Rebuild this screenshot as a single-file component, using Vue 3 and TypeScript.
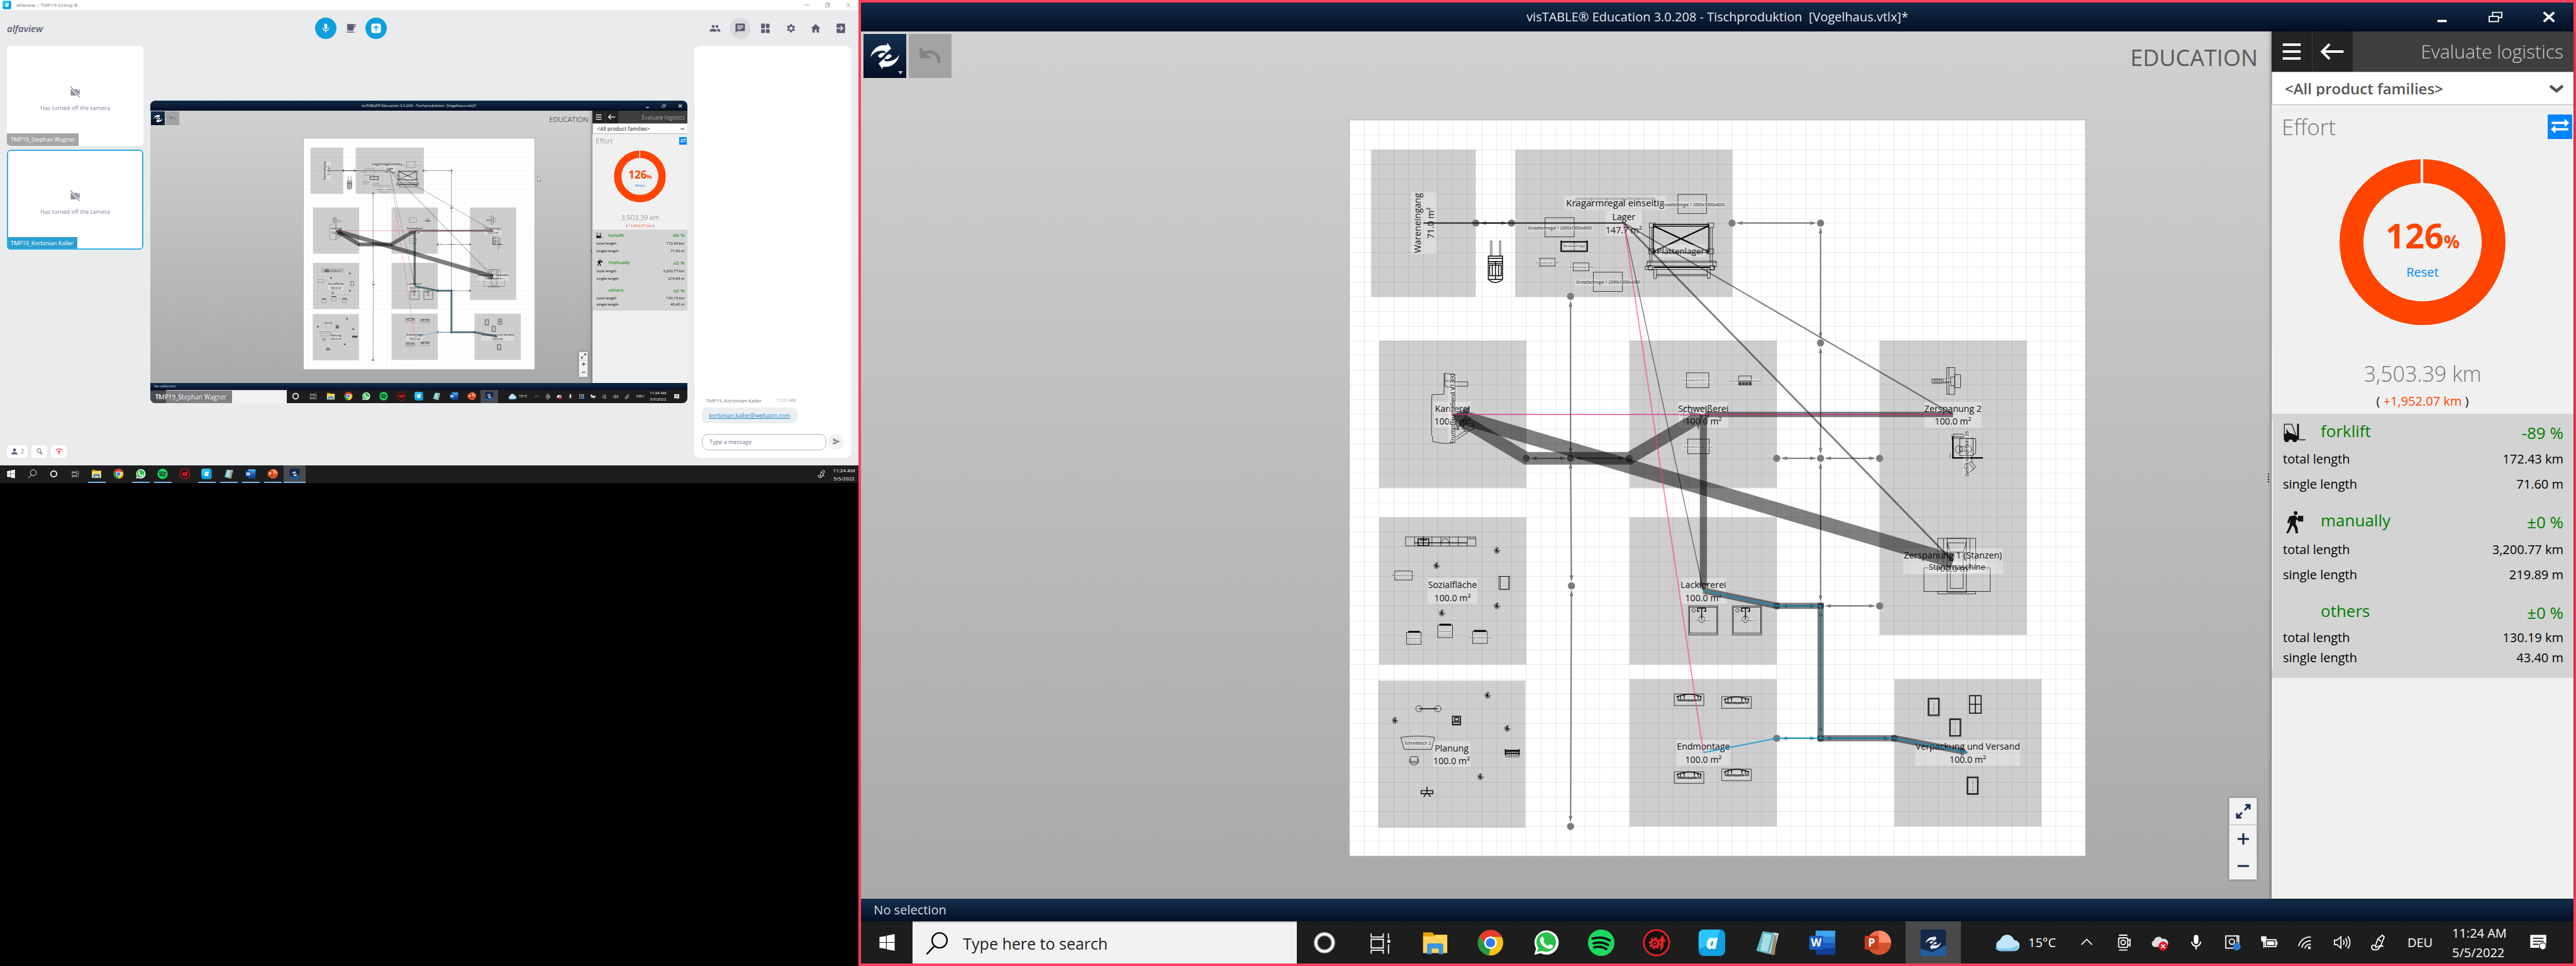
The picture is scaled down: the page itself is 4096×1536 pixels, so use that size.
<script setup lang="ts">
type Point = [number, number]

interface Label { x: number; y: number; text: string; size: number; w: number; turn?: boolean }

defineOptions({ name: 'App' })
defineProps<{ screen?: 'full' | 'mini' }>()

const participants = [
  { name: 'TMP19_Stephan Wagner', active: false },
  { name: 'TMP19_Korbinian Kaller', active: true },
]

const meetingTools = ['people', 'chat', 'layout', 'gear', 'home', 'leave']
const apps = ['cortana', 'taskview', 'explorer', 'chrome', 'whatsapp', 'spotify', 'game', 'alfa', 'notes', 'word', 'ppt', 'vistable']
const runningApps = ['explorer', 'whatsapp', 'spotify', 'alfa', 'notes', 'word', 'ppt', 'vistable']
const tray = ['up', 'camera', 'cloudx', 'mic', 'outlook', 'battery', 'wifi', 'volume', 'pen']

const groups = [
  { name: 'forklift', icon: 'forklift', change: '-89 %', total: '172.43 km', single: '71.60 m' },
  { name: 'manually', icon: 'walker', change: '±0 %', total: '3,200.77 km', single: '219.89 m' },
  { name: 'others', icon: '', change: '±0 %', total: '130.19 km', single: '43.40 m' },
]

/* floor plan: 50 x 50 cells on a 1645 unit square */
const SIZE = 1645
const grid = Array.from({ length: 51 }, (_, i) => Math.round((i * SIZE) / 50))
  .map((p) => `M${p} 0V${SIZE}M0 ${p}H${SIZE}`)
  .join('')

const rooms = [
  [48, 66, 234, 329], [370, 66, 486, 329], [66, 493, 329, 329], [626, 493, 329, 329],
  [1185, 493, 329, 658], [66, 888, 329, 329], [626, 888, 329, 329], [64, 1253, 329, 329],
  [626, 1250, 329, 329], [1218, 1250, 329, 329],
]

const stations = [
  { x: 165, y: 230, name: 'Wareneingang', area: '71.0 m²', w: 138, turn: true },
  { x: 613, y: 230, name: 'Lager', area: '147.7 m²', w: 81 },
  { x: 230, y: 658, name: 'Kanterei', area: '100.0 m²', w: 83 },
  { x: 791, y: 658, name: 'Schweißerei', area: '100.0 m²', w: 111 },
  { x: 1349, y: 658, name: 'Zerspanung 2', area: '100.0 m²', w: 130 },
  { x: 1349, y: 986, name: 'Zerspanung 1 (Stanzen)', area: '100.0 m²', w: 223 },
  { x: 230, y: 1052, name: 'Sozialfläche', area: '100.0 m²', w: 111 },
  { x: 791, y: 1052, name: 'Lackiererei', area: '100.0 m²', w: 102 },
  { x: 228, y: 1417, name: 'Planung', area: '100.0 m²', w: 83 },
  { x: 791, y: 1414, name: 'Endmontage', area: '100.0 m²', w: 120 },
  { x: 1382, y: 1414, name: 'Verpackung und Versand', area: '100.0 m²', w: 235 },
]

const labels: Label[] = [
  { x: 594, y: 185, text: 'Kragarmregal einseitig', size: 21, w: 228 },
  { x: 740, y: 292, text: 'Plattenlager', size: 19, w: 112 },
  { x: 470, y: 241, text: 'Grossfachregal 1 2000x1300x4000', size: 9, w: 148 },
  { x: 767, y: 189, text: 'Grossfachregal 1 2000x1300x4000', size: 9, w: 148 },
  { x: 578, y: 363, text: 'Grossfachregal 1 2000x1300x4000', size: 9, w: 148 },
  { x: 502, y: 282, text: 'Bereitstellregal', size: 7, w: 53 },
  { x: 442, y: 318, text: 'Fachbodenregal 1000', size: 5, w: 47 },
  { x: 518, y: 328, text: 'Fachbodenregal 1000', size: 5, w: 47 },
  { x: 230, y: 645, text: 'TrumpfTrumaBend V1300', size: 13, w: 151, turn: true },
  { x: 778, y: 582, text: 'Schweißtisch 16er 1,5x1', size: 6, w: 68 },
  { x: 772, y: 660, text: 'Schweißtisch 16er 1,5x1', size: 6, w: 68 },
  { x: 780, y: 730, text: 'Schweißtisch 16er 1,5x1', size: 6, w: 68 },
  { x: 884, y: 583, text: 'Schweißtisch Werkzeugwagen', size: 5, w: 66 },
  { x: 1334, y: 585, text: 'Säge', size: 8, w: 18 },
  { x: 1380, y: 746, text: 'Deckel-Maho DMU 35', size: 10, w: 94, turn: true },
  { x: 1358, y: 999, text: 'Stanzmaschine', size: 18, w: 128 },
  { x: 120, y: 1018, text: 'Metallschrank orange', size: 5, w: 47 },
  { x: 214, y: 1142, text: 'Eisautomat', size: 5, w: 26 },
  { x: 144, y: 1158, text: 'Snackautomat', size: 5, w: 33 },
  { x: 292, y: 1156, text: 'Kaltgetränkeautomat', size: 5, w: 47 },
  { x: 152, y: 1393, text: 'Schreibtisch 2', size: 9, w: 60 },
  { x: 790, y: 1118, text: 'Duschkabine', size: 5, w: 28 },
  { x: 889, y: 1118, text: 'Duschkabine', size: 5, w: 28 },
  { x: 759, y: 1297, text: 'Werkbank 1', size: 9, w: 52 },
  { x: 865, y: 1303, text: 'Werkbank 1', size: 9, w: 52 },
  { x: 759, y: 1471, text: 'Werkbank 1', size: 9, w: 52 },
  { x: 865, y: 1465, text: 'Werkbank 1', size: 9, w: 52 },
  { x: 1306, y: 1312, text: 'Mülltonne', size: 5, w: 22, turn: true },
  { x: 1354, y: 1358, text: 'Mülltonne', size: 5, w: 22, turn: true },
  { x: 1393, y: 1488, text: 'Mülltonne', size: 5, w: 22, turn: true },
]

const frames = [
  [437, 218, 65, 43], [734, 166, 64, 43], [545, 340, 65, 43], [425, 309, 34, 17], [500, 319, 35, 18],
  [753, 565, 50, 33], [747, 643, 50, 32], [756, 713, 48, 33], [101, 1008, 39, 20], [334, 1020, 24, 29],
  [337, 1020, 18, 29], [197, 1129, 33, 28], [127, 1145, 33, 27], [275, 1143, 33, 27],
  [758, 1086, 65, 65], [760, 1089, 61, 58], [856, 1086, 65, 65], [858, 1089, 61, 58],
  [1335, 553, 18, 60], [1353, 569, 13, 29], [1315, 935, 85, 66], [1284, 1001, 148, 53],
  [1336, 935, 43, 121], [1343, 966, 29, 81], [1315, 1054, 85, 5],
]

const plants: Point[] = [[329, 962], [194, 996], [329, 1086], [206, 1102], [308, 1286], [101, 1342], [352, 1360], [292, 1468]]
const benches: Point[] = [[726, 1283], [832, 1289], [726, 1457], [832, 1451]]
const bins: Point[] = [[1293, 1292], [1341, 1338], [1380, 1468]]

const n: Record<string, Point> = {
  a: [282, 230], b: [362, 230], c: [855, 230], d: [1053, 230], e: [494, 394], f: [395, 756],
  g: [494, 756], h: [625, 756], i: [496, 1041], j: [494, 1579], k: [1053, 498], l: [955, 756],
  m: [1053, 756], o: [1185, 756], p: [955, 1086], q: [1053, 1086], r: [1185, 1086],
  s: [955, 1382], t: [1053, 1382], u: [1218, 1382],
}

/* triangle with its tip on `tip`, opening towards `from` */
function head(tip: Point, from: Point, length: number, half: number): string {
  const dx = from[0] - tip[0]
  const dy = from[1] - tip[1]
  const d = Math.hypot(dx, dy)
  const ux = dx / d
  const uy = dy / d
  const bx = tip[0] + ux * length
  const by = tip[1] + uy * length
  const pts = [tip, [bx - uy * half, by + ux * half], [bx + uy * half, by - ux * half]]
  return pts.map((q) => q.map(Math.round).join(',')).join(' ')
}

const toward = (p: Point, q: Point, by: number): Point => {
  const d = Math.hypot(q[0] - p[0], q[1] - p[1])
  return [p[0] + ((q[0] - p[0]) / d) * by, p[1] + ((q[1] - p[1]) / d) * by]
}

const aisles = 'ab cd dk km mq qt eg gi ij fg gh lm mo pq qr st tu'.split(' ').map((pair) => {
  const p = n[pair[0]]
  const q = n[pair[1]]
  const ps = toward(p, q, 9)
  const qs = toward(q, p, 9)
  return { line: [toward(p, q, 18), toward(q, p, 18)], heads: [head(ps, q, 14, 4), head(qs, p, 14, 4)] }
})

const kanterei: Point = [230, 658]
const schweisserei: Point = [791, 658]
const lackiererei: Point = [791, 1052]
const versand: Point = [1382, 1414]

const flows = [
  { d: 'M165 230H613', w: 3, o: 0.75 },
  { d: 'M613 230L791 1052', w: 2, o: 0.5 },
  { d: 'M613 230L1349 986', w: 4, o: 0.5 },
  { d: 'M613 230L1349 658', w: 3, o: 0.5 },
  { d: 'M260 667L1349 986', w: 32, o: 0.5 },
  { d: 'M252 671L395 756H625L768 672', w: 28, o: 0.5 },
  { d: 'M800 658H1349', w: 12, o: 0.5 },
  { d: 'M791 658V1038', w: 16, o: 0.5 },
  { d: 'M791 1052L955 1086H1053V1382H1218L1370 1411', w: 14, o: 0.5 },
]
const flowHeads = [
  head(kanterei, [1349, 986], 33, 28),
  head(kanterei, n.f, 28, 26),
  head(schweisserei, n.h, 27, 24),
  head(schweisserei, [1349, 658], 12, 10),
  head(lackiererei, schweisserei, 16, 13),
  head(versand, n.u, 14, 12),
]
</script>

<template>
  <main v-if="!screen" class="desk">
    <svg class="symbols" aria-hidden="true">
      <symbol id="i-mic" viewBox="0 0 24 24"><path fill="currentColor" d="M12 14a3 3 0 0 0 3-3V5a3 3 0 0 0-6 0v6a3 3 0 0 0 3 3zm5-3a5 5 0 0 1-10 0H5.300a6.700 6.700 0 0 0 5.700 6.700V21h2v-3.300A6.700 6.700 0 0 0 18.700 11z" /></symbol>
      <symbol id="i-cup" viewBox="0 0 24 24"><path fill="currentColor" d="M20 3H4v10a4 4 0 0 0 4 4h6a4 4 0 0 0 4-4v-3h2a2 2 0 0 0 2-2V5a2 2 0 0 0-2-2zm0 5h-2V5h2zM3 19h16v2H3z" /></symbol>
      <symbol id="i-share" viewBox="0 0 24 24"><rect x="2" y="2" width="20" height="20" rx="4" fill="#fff" /><path d="M12 18V7M7 12l5-5 5 5" fill="none" stroke="#0f9fdc" stroke-width="2" /></symbol>
      <symbol id="i-people" viewBox="0 0 24 24"><path fill="currentColor" d="M8 11a3 3 0 1 0 0-6 3 3 0 0 0 0 6zm8 0a3 3 0 1 0 0-6 3 3 0 0 0 0 6zM8 13c-2.300 0-7 1.200-7 3.500V19h14v-2.500C15 14.200 10.300 13 8 13zm8 0-1 .1c1.200.8 2 2 2 3.400V19h6v-2.500c0-2.300-4.700-3.500-7-3.500z" /></symbol>
      <symbol id="i-chat" viewBox="0 0 24 24"><path fill="currentColor" d="M20 2H4a2 2 0 0 0-2 2v18l4-4h14a2 2 0 0 0 2-2V4a2 2 0 0 0-2-2zM6 6h12v2H6zm0 3h12v2H6zm0 3h8v2H6z" /></symbol>
      <symbol id="i-layout" viewBox="0 0 24 24"><path fill="currentColor" d="M3 2h8v10H3zM3 14h8v8H3zM13 14h8v8h-8z" /><rect x="13" y="2" width="8" height="10" rx="4" fill="currentColor" /></symbol>
      <symbol id="i-gear" viewBox="0 0 24 24"><path fill="currentColor" fill-rule="evenodd" d="M19.400 13a7 7 0 0 0 0-2l2.100-1.600-2-3.500-2.500 1a7 7 0 0 0-1.700-1L15 3.300h-4l-.4 2.600a7 7 0 0 0-1.700 1l-2.500-1-2 3.500L6.600 11a7 7 0 0 0 0 2l-2.200 1.600 2 3.500 2.500-1a7 7 0 0 0 1.700 1l.4 2.600h4l.4-2.600a7 7 0 0 0 1.700-1l2.500 1 2-3.500zM13 15.500a3.500 3.500 0 1 1 0-7 3.500 3.500 0 0 1 0 7z" /></symbol>
      <symbol id="i-home" viewBox="0 0 24 24"><path fill="currentColor" d="M10 21v-6h4v6h5v-9h3L12 3 2 12h3v9z" /></symbol>
      <symbol id="i-leave" viewBox="0 0 24 24"><rect x="3" y="2" width="18" height="20" rx="2" fill="currentColor" /><path d="M3 12h13M11 7l5 5-5 5" fill="none" stroke="#e9ebec" stroke-width="2" /></symbol>
      <symbol id="i-nocam" viewBox="0 0 24 24"><path fill="#8f8d9f" d="M3 6h14v4l4-4v12l-4-4v5H3z" /><path d="M3 2l18 20" stroke="#fff" stroke-width="4" /><path d="M3 1l18 21" stroke="#8f8d9f" stroke-width="2" /></symbol>
      <symbol id="i-user" viewBox="0 0 24 24"><circle cx="12" cy="7" r="5" fill="#5d5b72" /><path fill="#5d5b72" d="M2 21c0-5 4-7 10-7s10 2 10 7z" /></symbol>
      <symbol id="i-find" viewBox="0 0 24 24"><circle cx="10" cy="9" r="6" fill="none" stroke="#5d5b72" stroke-width="2" /><path d="M14 14l6 7" stroke="#5d5b72" stroke-width="3" /></symbol>
      <symbol id="i-net" viewBox="0 0 24 24"><path d="M2 8q10-8 20 0M7 13q5-4 10 0M12 12v9" fill="none" stroke="#ff3f5e" stroke-width="3" /></symbol>
      <symbol id="i-send" viewBox="0 0 24 24"><path fill="#8f8d9f" d="M3 3l19 9-19 9v-7l10-2-10-2z" /></symbol>
      <symbol id="i-win" viewBox="0 0 48 48"><path fill="#fff" d="M4 10l17-3v16H4zM23 6l21-4v21H23zM4 25h17v16L4 38zM23 25h21v21l-21-4z" /></symbol>
      <symbol id="i-lens" viewBox="0 0 48 48"><circle cx="29" cy="18" r="15" fill="none" stroke="currentColor" stroke-width="3" /><path d="M19 29L3 46" stroke="currentColor" stroke-width="3" /></symbol>
      <symbol id="i-cortana" viewBox="0 0 48 48"><circle cx="24" cy="24" r="15" fill="none" stroke="#999" stroke-width="7" /><circle cx="24" cy="24" r="15" fill="none" stroke="#fff" stroke-width="4" /></symbol>
      <symbol id="i-taskview" viewBox="0 0 48 48"><path d="M9 8v6h21V8M9 18h21v15H9zM9 43v-6h21v6M39 8v9M39 27v16" fill="none" stroke="#fff" stroke-width="2" /><rect x="37" y="19" width="5" height="5" fill="#fff" /></symbol>
      <symbol id="i-explorer" viewBox="0 0 48 48"><path fill="#e3a100" d="M3 6h16l4 5v5H3z" /><path fill="#ffd45e" d="M3 13h18l3-3h21v32H3z" /><path fill="#3a96dd" d="M10 44V29a4 4 0 0 1 4-4h20a4 4 0 0 1 4 4v15h-8V34H18v10z" /></symbol>
      <symbol id="i-chrome" viewBox="0 0 48 48"><circle cx="24" cy="24" r="22" fill="#fbc116" /><path fill="#e33b2e" d="M5 13a22 22 0 0 1 39 1H24l-9 14z" /><path fill="#269a4b" d="M5 13l10 16 9 5-3 12A22 22 0 0 1 5 13z" /><circle cx="24" cy="24" r="11" fill="#fff" /><circle cx="24" cy="24" r="8" fill="#2f7af0" /></symbol>
      <symbol id="i-whatsapp" viewBox="0 0 48 48"><path fill="#fff" d="M4 45l3-11A21 21 0 1 1 15 42z" /><path fill="#2bc04c" d="M9 40l2-7a17 17 0 1 1 6 5z" /><path fill="#fff" d="M17 14c2-1 3 0 4 4 1 1-2 3-1 4 2 4 4 6 8 7 1 1 2-3 4-2 4 1 5 2 4 4-2 5-8 4-12 2-5-3-9-7-10-12 0-3 1-6 3-7z" /></symbol>
      <symbol id="i-spotify" viewBox="0 0 48 48"><circle cx="24" cy="24" r="23" fill="#1ed760" /><path d="M9 17q16-5 30 3M11 25q14-4 25 3M12 32q12-3 21 3" fill="none" stroke="#111" stroke-width="4" stroke-linecap="round" /></symbol>
      <symbol id="i-game" viewBox="0 0 48 48"><circle cx="24" cy="24" r="22" fill="#111" stroke="#ec2128" stroke-width="3" /><circle cx="21" cy="25" r="6" fill="none" stroke="#ec2128" stroke-width="4" /><circle cx="21" cy="25" r="9" fill="none" stroke="#ec2128" stroke-width="3" stroke-dasharray="4 3" /><path fill="#ec2128" d="M34 10l6 12h-4v10l-6 6 2-16h-4z" /><circle cx="21" cy="25" r="2" fill="#ec2128" /></symbol>
      <symbol id="i-alfa" viewBox="0 0 48 48"><rect x="1" y="1" width="46" height="46" rx="9" fill="#109fe0" /><path fill="#2cc4ff" d="M1 34V10a9 9 0 0 1 9-9h28q-4 26-37 33z" /><text x="24" y="35" fill="#fff" font-family="Open Sans, sans-serif" font-size="34" font-weight="800" font-style="italic" text-anchor="middle">a</text></symbol>
      <symbol id="i-notes" viewBox="0 0 48 48"><path fill="#e8e8e0" d="M34 6l10 2-9 36-12-2z" /><path fill="#9a8a6a" d="M36 12l5-3-4 36h-8z" /><path fill="#5fb6c4" d="M16 4l21 3-10 37-22-6z" /><path fill="#a9dde4" d="M18 8l14 2-8 30-12-3z" /></symbol>
      <symbol id="i-word" viewBox="0 0 48 48"><path fill="#41a5ee" d="M12 3h34v11H12z" /><path fill="#2b7cd3" d="M12 14h34v10H12z" /><path fill="#185abd" d="M12 24h34v10H12z" /><path fill="#103f91" d="M12 34h34v11H12z" /><rect x="1" y="12" width="24" height="24" rx="2" fill="#185abd" /><text x="13" y="31" fill="#fff" font-family="Open Sans, sans-serif" font-size="19" font-weight="700" text-anchor="middle">W</text></symbol>
      <symbol id="i-ppt" viewBox="0 0 48 48"><circle cx="26" cy="24" r="21" fill="#ed6c47" /><path fill="#ff8f6b" d="M26 3a21 21 0 0 1 21 21H26z" /><path fill="#d35230" d="M5 24h42a21 21 0 0 1-42 0z" /><rect x="1" y="12" width="24" height="24" rx="2" fill="#c43e1c" /><text x="13" y="31" fill="#fff" font-family="Open Sans, sans-serif" font-size="19" font-weight="700" text-anchor="middle">P</text></symbol>
      <symbol id="i-swirl" viewBox="0 0 48 48"><path fill="currentColor" d="M1 26C4 12 15 5 27 7l1-4 6 9-9 8-1-4c-9-2-18 2-23 10zM47 22c-3 14-14 21-26 19l-1 4-6-9 9-8 1 4c9 2 18-2 23-10zM13 24c3-5 8-6 12-4-3 3-4 6-9 7zM35 24c-3 5-8 6-12 4 3-3 4-6 9-7z" /></symbol>
      <symbol id="i-vistable" viewBox="0 0 48 48"><rect x="2" y="1" width="44" height="46" rx="4" fill="#14284c" /><path fill="#1f5f9f" d="M2 34l20 6 24-12v15a4 4 0 0 1-4 4H6a4 4 0 0 1-4-4z" /><use href="#i-swirl" x="9" y="10" width="30" height="28" color="#e6ecf5" /></symbol>
      <symbol id="i-undo" viewBox="0 0 48 48"><path d="M12 20q14-6 22 2 4 5 4 13" fill="none" stroke="#7f8488" stroke-width="5" /><path fill="#7f8488" d="M7 9l1 18 18 1z" /></symbol>
      <symbol id="i-up" viewBox="0 0 48 48"><path d="M10 30l14-14 14 14" fill="none" stroke="#fff" stroke-width="3" /></symbol>
      <symbol id="i-camera" viewBox="0 0 48 48"><rect x="12" y="12" width="24" height="25" rx="4" fill="none" stroke="#fff" stroke-width="3" /><circle cx="24" cy="24" r="6" fill="none" stroke="#fff" stroke-width="3" /><path d="M36 20l6-4v17l-6-4M13 5h22M13 44h22" fill="none" stroke="#fff" stroke-width="3" /></symbol>
      <symbol id="i-cloudx" viewBox="0 0 48 48"><path fill="#ddd" d="M10 36a9 9 0 0 1-1-17 12 12 0 0 1 22-4 10 10 0 0 1 8 21z" /><circle cx="33" cy="34" r="12" fill="#e81123" /><path d="M28 29l10 10M38 29L28 39" stroke="#fff" stroke-width="3" /></symbol>
      <symbol id="i-outlook" viewBox="0 0 48 48"><rect x="6" y="7" width="34" height="32" fill="none" stroke="#fff" stroke-width="3" /><circle cx="22" cy="22" r="7" fill="none" stroke="#fff" stroke-width="3" /><path d="M36 5v18" stroke="#fff" stroke-width="3" /><circle cx="35" cy="35" r="10" fill="#2b7cd3" /></symbol>
      <symbol id="i-battery" viewBox="0 0 48 48"><rect x="14" y="17" width="28" height="18" fill="none" stroke="#fff" stroke-width="3" /><path fill="#fff" d="M18 21h20v10H18zM42 22h4v8h-4zM3 8h14v8a7 7 0 0 1-14 0z" /><path d="M10 22v16" stroke="#fff" stroke-width="3" /></symbol>
      <symbol id="i-wifi" viewBox="0 0 48 48"><path d="M6 34A30 30 0 0 1 38 10M14 38A22 22 0 0 1 38 20M22 40a14 14 0 0 1 16-11" fill="none" stroke="#fff" stroke-width="3" /><circle cx="34" cy="38" r="4" fill="#fff" /></symbol>
      <symbol id="i-volume" viewBox="0 0 48 48"><path d="M4 18h7l10-9v30l-10-9H4z" fill="none" stroke="#fff" stroke-width="3" /><path d="M27 18q5 6 0 12M33 13q8 11 0 22M39 8q12 16 0 32" fill="none" stroke="#fff" stroke-width="3" /></symbol>
      <symbol id="i-pen" viewBox="0 0 48 48"><path d="M16 33l6-18L34 5l5 5-9 22-13 5zM16 33c-9-5-12 2-9 7s15 5 18-1 7-7 12-5M22 15l9 6" fill="none" stroke="#fff" stroke-width="3" /></symbol>
      <symbol id="i-note" viewBox="0 0 48 48"><path fill="#fff" d="M3 4h42v34h-8v7l-9-7H3z" /><path d="M10 13h28M10 21h28M10 29h15" stroke="#1d1d1d" stroke-width="3" /><circle cx="36" cy="34" r="9" fill="#fff" stroke="#1d1d1d" stroke-width="2" /></symbol>
      <symbol id="i-weather" viewBox="0 0 48 48"><path fill="#bfe6fb" d="M12 40a11 11 0 0 1-1-21 14 14 0 0 1 27 0 10.500 10.500 0 0 1 0 21z" /><path fill="#7cc7ef" d="M12 40a11 11 0 0 1-10-7q22 6 44-4a10 10 0 0 1-8 11z" /></symbol>
      <symbol id="i-forklift" viewBox="0 0 48 48"><path d="M3 30V6h16l8 22" fill="none" stroke="#333" stroke-width="2" /><path d="M32 5v34" stroke="#111" stroke-width="4" /><path d="M33 39h15" stroke="#555" stroke-width="3" /><path fill="#111" d="M2 26h6l-1-11 6 9 12 4 6 3v8H2z" /><circle cx="8" cy="39" r="5" fill="#111" /><circle cx="25" cy="39" r="5" fill="#111" /></symbol>
      <symbol id="i-walker" viewBox="0 0 48 48"><circle cx="27" cy="5" r="4" fill="#111" /><path fill="#111" d="M14 12l12-2 6 6 3 2v3l-7-2-1 9 4 8 1 12h-5l-2-11-5-6-4 9-5 8h-4l7-16 2-13-3 8-4-2z" /><rect x="32" y="11" width="11" height="12" fill="#111" /></symbol>
    </svg>

    <section class="meeting">
      <header class="alfa-title">
        <svg class="alfa-icon"><use href="#i-alfa" /></svg>
        <span>alfaview – TMP19 Group B</span>
        <div class="alfa-window">
          <button type="button" aria-label="Minimize"><svg viewBox="0 0 10 10"><path d="M0 5h10" /></svg></button>
          <button type="button" aria-label="Restore"><svg viewBox="0 0 10 10"><path d="M1 3h6v6H1zM3 3V1h6v6H7" /></svg></button>
          <button type="button" aria-label="Close"><svg viewBox="0 0 10 10"><path d="M0 0l10 10M10 0L0 10" /></svg></button>
        </div>
      </header>

      <div class="alfa-bar">
        <div class="alfa-main">
          <strong class="brand">alfaview</strong>
          <nav class="talk">
            <button type="button" class="round blue" aria-label="Microphone"><svg><use href="#i-mic" /></svg></button>
            <button type="button" class="cup" aria-label="Break"><svg><use href="#i-cup" /></svg></button>
            <button type="button" class="round blue" aria-label="Share screen"><svg><use href="#i-share" /></svg></button>
          </nav>
        </div>
        <nav class="tools">
          <button v-for="t in meetingTools" :key="t" type="button" class="round" :class="{ on: t === 'chat' }" :aria-label="t">
            <svg><use :href="'#i-' + t" /></svg>
          </button>
        </nav>
      </div>

      <div class="alfa-body">
        <aside class="people">
          <article v-for="p in participants" :key="p.name" class="person" :class="{ active: p.active }">
            <svg><use href="#i-nocam" /></svg>
            <p>Has turned off the camera</p>
            <span class="nametag">{{ p.name }}</span>
          </article>
          <div class="pills">
            <button type="button" class="pill wide"><svg><use href="#i-user" /></svg>2</button>
            <button type="button" class="pill" aria-label="Search"><svg><use href="#i-find" /></svg></button>
            <button type="button" class="pill" aria-label="Connection"><svg><use href="#i-net" /></svg></button>
          </div>
        </aside>

        <div class="share">
          <App screen="mini" />
          <svg class="cursor" viewBox="0 0 12 18"><path d="M1 1v14l4-3 2 5 2-1-2-5h4z" fill="#fff" stroke="#444" /></svg>
          <span class="share-name">TMP19_Stephan Wagner</span>
        </div>

        <aside class="chat">
          <p class="meta"><b>TMP19_Korbinian Kaller</b><time>11:21 AM</time></p>
          <p class="bubble"><a href="mailto:korbinian.kaller@webasto.com">korbinian.kaller@webasto.com</a></p>
          <form class="compose" @submit.prevent>
            <input type="text" placeholder="Type a message" aria-label="Type a message" />
            <button type="submit" aria-label="Send"><svg><use href="#i-send" /></svg></button>
          </form>
        </aside>
      </div>

      <footer class="dock">
        <button type="button" class="sys" aria-label="Start"><svg><use href="#i-win" /></svg></button>
        <button type="button" class="sys" aria-label="Search"><svg color="#fff"><use href="#i-lens" /></svg></button>
        <button
          v-for="a in apps" :key="a" type="button" :aria-label="a"
          :class="{ sys: a === 'cortana' || a === 'taskview', running: runningApps.includes(a), front: a === 'vistable' }"
        ><svg><use :href="'#i-' + a" /></svg></button>
        <svg class="dock-pen"><use href="#i-pen" /></svg>
        <p class="dock-time">11:24 AM<br />5/5/2022</p>
      </footer>
    </section>

    <App screen="full" />
  </main>

  <section v-else class="screen" :class="screen">
    <header class="titlebar">
      <span></span>
      <h1>visTABLE® Education 3.0.208 - Tischproduktion&nbsp; [Vogelhaus.vtlx]*</h1>
      <div class="window-buttons">
        <button type="button" aria-label="Minimize"><svg viewBox="0 0 24 24"><path d="M4 19h16" stroke-width="4" /></svg></button>
        <button type="button" aria-label="Restore"><svg viewBox="0 0 24 24"><path d="M1 11h16v9H1zM7 10V4h16v9h-6" stroke-width="2" /></svg></button>
        <button type="button" aria-label="Close"><svg viewBox="0 0 24 24"><path d="M3 4l18 16M21 4L3 20" stroke-width="4" /></svg></button>
      </div>
    </header>

    <div class="work">
      <div class="stage">
        <svg class="plan" :viewBox="`0 0 ${SIZE} ${SIZE}`">
          <rect :width="SIZE" :height="SIZE" fill="#fff" />
          <rect v-for="(r, i) in rooms" :key="i" :x="r[0]" :y="r[1]" :width="r[2]" :height="r[3]" fill="#cecece" />
          <path :d="grid" class="grid" />

          <g class="ink">
            <rect v-for="(r, i) in frames" :key="i" :x="r[0]" :y="r[1]" :width="r[2]" :height="r[3]" />
            <!-- cantilever rack -->
            <path opacity=".7" d="M506 194V174H682V194M506 177H682M541 174V194M576 174V194M611 174V194M646 174V194" />
            <!-- staging rack -->
            <path stroke-width="3" d="M473 269V293H531V269M473 272H531" />
            <path d="M502 270V293" />
            <!-- fork truck -->
            <path d="M315 270V304H318V270ZM335 270V304H338V270Z" />
            <path d="M310 304H342V356Q326 370 310 356Z" stroke-width="2" />
            <path d="M310 309H342M310 316H342M310 320H342M313 324H339V348H313ZM319 324V348M326 316V356M333 324V348M312 356H340" stroke-width="2" />
            <!-- sheet storage -->
            <path d="M679 236L803 294M803 236L679 294" stroke-width="3" />
            <path d="M679 233H803V296H679ZM679 237H803" stroke-width="2" />
            <path d="M670 230H684V240H670ZM800 230H814V240H800ZM671 240V318M676 240V318M811 240V318M806 240V318M669 288H682V299H669ZM800 288H814V299H800ZM665 315H820V318H665ZM665 318V328H672V318M812 318V328H820V318M661 326H816V334H661ZM668 325V335H677V325ZM806 325V335H815V325ZM680 332V354H686V332M800 332V354H806V332M686 345H800M686 348H800" />
            <path d="M680 329H806" stroke-width="3" />
            <!-- press brake -->
            <path d="M211 566L236 569V721L212 723L186 719L185 706L183 704V639L184 614L211 613ZM213 568V595L236 599M213 583H236M236 585H264V595H236M236 710L264 690L267 696L236 716M254 680L275 677L279 690L258 697ZM255 690L278 683M236 662H246M236 691H246" />
            <!-- kitchen -->
            <path d="M125 932H282V952H125ZM145 932V952M184 932V952M204 932V952M223 932V952M243 932V952M263 932V952M204 945L210 936H217L223 945M264 936H282" />
            <path d="M145 945H263M153 936H177V951H153ZM165 931V951M157 939H173" stroke-width="2" />
            <!-- vending machines -->
            <path d="M201 1128H227M131 1144H157M278 1142H305" stroke-width="4" />
            <!-- paint booths -->
            <g v-for="x in [0, 98]" :key="x" :transform="`translate(${x} 0)`">
              <circle cx="769" cy="1096" r="4" /><circle cx="787" cy="1116" r="7" />
              <path d="M778 1091H796M778 1091V1098H782M796 1091V1098H792M787 1091V1117" stroke-width="2" />
            </g>
            <!-- welding trolley -->
            <path d="M870 593V572H898V593M870 583H898" />
            <path d="M872 584V593M875 584V593M879 584V593M882 584V593M886 584V593M889 584V593M893 584V593M896 584V593" stroke-width="2" />
            <!-- saw -->
            <path d="M1302 579H1335V588H1302ZM1307 579V588M1311 579V588M1315 579V588M1319 579V588M1323 579V588M1327 579V588M1340 553V613M1344 574H1353M1344 594H1353M1344 574V594" />
            <!-- milling centre -->
            <path d="M1348 706V756H1416M1351 711H1390L1400 712V745L1394 748M1364 712H1394V750H1364ZM1350 702H1374V708H1350ZM1347 704V714M1343 746V754M1364 730H1380V740H1364ZM1391 750V764L1400 776L1384 789M1391 764L1376 770L1374 776L1384 789M1386 768L1396 781" />
            <circle cx="1362" cy="736" r="8" /><circle cx="1383" cy="735" r="8" /><path d="M1349 708V755H1416" stroke-width="3" />
            <!-- punching machine -->
            <path d="M1337 945H1379L1372 966H1343ZM1328 935V1001M1387 935V1001M1337 945V988L1330 1001" />
            <!-- barbell, copier, desk, chair, shelf, easel -->
            <circle cx="155" cy="1316" r="7" /><circle cx="197" cy="1316" r="7" /><path d="M155 1316H197" stroke-width="2" />
            <path d="M230 1333H248V1352H230ZM235 1336H244V1343H235ZM230 1346H248M230 1351H248" stroke-width="2" />
            <path d="M114 1380Q152 1374 190 1380L183 1407H122Z" />
            <path d="M136 1423H152V1434H136ZM134 1428V1435Q144 1450 154 1435V1428M134 1437H154" />
            <path d="M348 1406V1420M379 1406V1420M347 1416H380" stroke-width="2" />
            <path d="M347 1410H380" stroke-width="4" />
            <path d="M350 1411V1425M354 1411V1425M358 1411V1425M362 1411V1425M366 1411V1425M370 1411V1425M374 1411V1425M378 1411V1425" />
            <path d="M173 1490V1506M160 1499H186V1506H160ZM171 1506L166 1513M176 1506L181 1513" stroke-width="2" />
            <!-- workbenches -->
            <g v-for="(b, i) in benches" :key="'b' + i" :transform="`translate(${b[0]} ${b[1]})`">
              <path d="M0 0H66V26H0Z" />
              <path d="M5 7Q33 -6 61 7M8 4V14H59V4M14 2V12M22 1V12M45 1V12M53 2V12" stroke-width="2" />
            </g>
            <!-- packing boxes -->
            <g v-for="(b, i) in bins" :key="'c' + i" :transform="`translate(${b[0]} ${b[1]})`">
              <path d="M0 0H26V40H0Z" /><path d="M2 2H24V38H2Z" stroke-width="2" />
            </g>
            <path d="M1386 1287H1412V1326H1386ZM1399 1287V1326M1386 1306H1412" stroke-width="2" />
            <path
              v-for="(p, i) in plants" :key="'p' + i" :transform="`translate(${p[0]} ${p[1]})`"
              d="M-7 -3L7 4M-5 5L4 -6M0 -8L1 8M-3 -6L3 6M-7 1L8 0M3 -7L-3 7M-2 -4L2 5"
            />
          </g>

          <g class="labels">
            <g v-for="s in stations" :key="s.name" :transform="`translate(${s.x} ${s.y})${s.turn ? ' rotate(-90)' : ''}`">
              <rect :x="-s.w / 2" y="-28" :width="s.w" height="57" />
              <text font-size="20" y="-6">{{ s.name }}</text>
              <text font-size="20" y="23">{{ s.area }}</text>
            </g>
            <g v-for="l in labels" :key="l.text + l.x + l.y" :transform="`translate(${l.x} ${l.y})${l.turn ? ' rotate(-90)' : ''}`">
              <rect :x="-l.w / 2" :y="-l.size * 0.75" :width="l.w" :height="l.size * 1.5" />
              <text :font-size="l.size" :y="Math.round(l.size * 0.35)" :opacity="l.size < 8 ? 0.75 : 1">{{ l.text }}</text>
            </g>
          </g>

          <g fill="#7a7a80" stroke="#7a7a80">
            <template v-for="(a, i) in aisles" :key="i">
              <line :x1="a.line[0][0]" :y1="a.line[0][1]" :x2="a.line[1][0]" :y2="a.line[1][1]" stroke-width="3" />
              <polygon v-for="h in a.heads" :key="h" :points="h" stroke="none" />
            </template>
            <circle v-for="(p, k) in n" :key="k" :cx="p[0]" :cy="p[1]" r="8" stroke="none" />
          </g>

          <path v-for="f in flows" :key="f.d" :d="f.d" fill="none" stroke="#000" :stroke-width="f.w" :stroke-opacity="f.o" />
          <polygon v-for="h in flowHeads" :key="h" :points="h" fill-opacity=".45" />
          <path d="M230 658H1349" stroke="#e0267f" stroke-width="3" stroke-opacity=".6" />
          <path d="M613 230L791 1414" stroke="#f23d9a" stroke-width="3" stroke-opacity=".7" stroke-dasharray="4 1" />
          <path d="M791 1052L955 1086H1053V1382" class="teal" />
          <path d="M791 1414L955 1382H1218L1382 1414" class="teal" />
        </svg>
      </div>

      <div class="toolbox">
        <button type="button" class="menu" aria-label="Menu"><svg><use href="#i-swirl" /></svg><i></i></button>
        <button type="button" class="undo" aria-label="Undo"><svg><use href="#i-undo" /></svg></button>
      </div>
      <strong class="edition">EDUCATION</strong>
      <div class="zoom">
        <button type="button" aria-label="Fit"><svg viewBox="0 0 24 24"><path d="M14 10l8-8M15 2h7v7M10 14l-8 8M2 15v7h7" /></svg></button>
        <button type="button" aria-label="Zoom in"><svg viewBox="0 0 24 24"><path d="M3 12h18M12 3v18" /></svg></button>
        <button type="button" aria-label="Zoom out"><svg viewBox="0 0 24 24"><path d="M3 12h18" /></svg></button>
      </div>
      <i class="splitter"></i>

      <aside class="panel">
        <header class="panel-head">
          <button type="button" aria-label="Menu"><svg viewBox="0 0 48 48"><path d="M6 10h36M6 24h36M6 38h36" stroke-width="5" /></svg></button>
          <button type="button" aria-label="Back"><svg viewBox="0 0 48 48"><path d="M2 24h44M18 9L3 24l15 15" stroke-width="5" /></svg></button>
          <h2>Evaluate logistics</h2>
        </header>
        <label class="family">
          <select aria-label="Product family"><option>&lt;All product families&gt;</option></select>
          <svg viewBox="0 0 24 16"><path d="M1 3l11 9 11-9" /></svg>
        </label>
        <div class="effort">
          <h3>Effort</h3>
          <button type="button" aria-label="Swap"><svg viewBox="0 0 48 48"><path d="M6 17h30M12 31h30" stroke="#fff" stroke-width="5" /><path fill="#fff" d="M34 8l10 9-10 9zM14 22L4 31l10 9z" /></svg></button>
        </div>
        <div class="gauge">
          <svg viewBox="0 0 266 266">
            <circle cx="133" cy="133" r="113" fill="none" stroke="#fff" stroke-width="41" />
            <circle cx="133" cy="133" r="113" fill="none" stroke="#ff4500" stroke-width="38" />
            <path d="M132 0V40" stroke="#fff" stroke-width="4" />
            <path d="M132 0V40" stroke="#ddd" stroke-width="1" />
          </svg>
          <div class="gauge-text">
            <p>126<small>%</small></p>
            <a href="#reset">Reset</a>
          </div>
        </div>
        <p class="distance">3,503.39 km</p>
        <p class="delta">( <em>+1,952.07 km</em> )</p>
        <table>
          <tbody v-for="g in groups" :key="g.name" :class="{ compact: !g.icon }">
            <tr class="group">
              <th scope="rowgroup"><svg><use v-if="g.icon" :href="'#i-' + g.icon" /></svg>{{ g.name }}</th>
              <td>{{ g.change }}</td>
            </tr>
            <tr><th scope="row">total length</th><td>{{ g.total }}</td></tr>
            <tr><th scope="row">single length</th><td>{{ g.single }}</td></tr>
          </tbody>
        </table>
      </aside>
    </div>

    <div class="status">No selection</div>

    <footer class="taskbar">
      <button type="button" class="start" aria-label="Start"><svg><use href="#i-win" /></svg></button>
      <label class="search"><svg><use href="#i-lens" /></svg><input type="text" placeholder="Type here to search" aria-label="Type here to search" /></label>
      <button v-for="a in apps" :key="a" type="button" class="app" :class="{ front: a === 'vistable' }" :aria-label="a"><svg><use :href="'#i-' + a" /></svg></button>
      <div class="tray">
        <span class="weather"><svg><use href="#i-weather" /></svg>15°C</span>
        <svg v-for="t in tray" :key="t" class="tray-icon"><use :href="'#i-' + t" color="#fff" /></svg>
        <span class="lang">DEU</span>
        <p class="clock">11:24 AM<br />5/5/2022</p>
        <svg class="note"><use href="#i-note" /></svg>
      </div>
    </footer>
  </section>
</template>

<style>
body { margin: 0; background: #000; }
</style>

<style scoped>
* { box-sizing: border-box; margin: 0; }
button { border: 0; padding: 0; background: none; font: inherit; color: inherit; display: grid; place-items: center; cursor: pointer; }
h1, h2, h3 { font-weight: 400; }
input { font: inherit; border: 0; outline: 0; min-width: 0; }

.desk {
  display: grid;
  grid-template-columns: 1fr 2fr;
  align-items: start;
  min-height: 100vh;
  background: #000;
  font-family: "Open Sans", "Noto Sans", sans-serif;
  line-height: 1;
}
.symbols { position: absolute; width: 0; height: 0; }

/* meeting window */
.meeting { display: flex; flex-direction: column; aspect-ratio: 16 / 9; background: #e9ebec; font-size: 9px; color: #85839a; min-width: 0; }
.alfa-title { display: flex; align-items: center; gap: 6px; height: 16px; padding-left: 2px; background: #fff; font-size: 8px; line-height: 12px; color: #777; }
.alfa-icon { width: 18px; height: 14px; }
.alfa-window { display: flex; margin-left: auto; }
.alfa-window button { width: 33px; height: 14px; }
.alfa-window svg { width: 8px; height: 8px; fill: none; stroke: #888; }

.alfa-bar { display: flex; align-items: center; height: 57px; padding: 0 11px; color: #5d5b72; }
.alfa-main { flex: 1; display: grid; grid-template-columns: 1fr auto 1fr; align-items: center; }
.brand { font-size: 15px; line-height: 20px; font-style: italic; font-weight: 600; }
.talk, .tools { display: flex; gap: 6px; align-items: center; }
.tools { width: 250px; justify-content: flex-end; }
.round { width: 34px; height: 34px; border-radius: 50%; }
.round svg, .cup svg { width: 18px; height: 18px; }
.cup { width: 34px; height: 34px; }
.blue { background: #0f9fdc; color: #fff; }
.on { background: #d9dbdd; }

.alfa-body { flex: 1; display: grid; grid-template-columns: 217px 1fr 250px; gap: 11px; padding: 0 11px 12px; min-height: 0; }
.people { display: flex; flex-direction: column; gap: 6px; }
.person { position: relative; height: 159px; border-radius: 6px; background: #fff; overflow: hidden; display: flex; flex-direction: column; align-items: center; justify-content: center; gap: 11px; padding-top: 8px; }
.person svg { width: 19px; height: 19px; }
.person.active::after { content: ""; position: absolute; inset: 0; border: 2px solid #34aee2; border-radius: 6px; }
.nametag { position: absolute; left: 0; bottom: 0; height: 20px; line-height: 20px; padding: 0 6px; background: #a4a5a6; color: #fff; }
.active .nametag { background: #2a9fd2; }
.pills { display: flex; gap: 6px; margin-top: auto; }
.pill { width: 25px; height: 20px; border-radius: 5px; background: #fff; color: #777; }
.pill.wide { display: flex; align-items: center; justify-content: center; gap: 4px; width: 33px; }
.pill svg { width: 12px; height: 12px; }

.share { position: relative; align-self: center; border-radius: 8px; overflow: hidden; }
.share-name { position: absolute; left: 0; bottom: 0; height: 20px; line-height: 20px; padding: 0 8px; background: rgb(90 91 94 / 75%); color: #fff; font-size: 10px; }
.cursor { position: absolute; left: 72%; top: 25%; width: 7px; height: 10px; }

.chat { display: flex; flex-direction: column; justify-content: flex-end; background: #fff; border-radius: 9px; padding: 12px; }
.meta { display: flex; gap: 24px; padding: 0 6px 6px; font-size: 8px; line-height: 10px; color: #77758c; }
.meta b { font-weight: 400; }
.meta time { font-size: 7px; color: #999; }
.bubble { align-self: flex-start; height: 25px; line-height: 25px; padding: 0 11px; border-radius: 7px; background: #eceef0; margin-bottom: 17px; }
.bubble a { color: #1a87c4; }
.compose { display: flex; gap: 3px; }
.compose input { flex: 1; height: 26px; padding: 0 11px; border: 1px solid #b4b4b8; border-radius: 10px; color: #77758c; }
.compose input::placeholder { color: #77758c; opacity: 1; }
.compose button { width: 25px; height: 25px; border-radius: 50%; background: #f2f2f3; }
.compose svg { width: 14px; height: 14px; }

.dock { display: flex; align-items: center; height: 28px; background: #1d1d1d; color: #fff; font-size: 8px; }
.dock button { width: 35px; height: 28px; }
.dock .sys { width: 34px; }
.dock button svg { width: 17px; height: 17px; }
.dock .sys svg { width: 15px; height: 15px; }
.dock .running { background: linear-gradient(#76b9ed, #76b9ed) center bottom / 28px 2px no-repeat; }
.dock .front { background: linear-gradient(#76b9ed, #76b9ed) center bottom / 100% 2px no-repeat #4a4a4a; }
.dock-pen { width: 15px; height: 15px; margin-left: auto; margin-right: 11px; }
.dock-time { margin-right: 6px; line-height: 13px; text-align: center; }

/* planning application */
.screen {
  display: grid;
  grid-template-rows: var(--title-h) 1fr var(--status-h) var(--task-h);
  aspect-ratio: 16 / 9;
  min-width: 0;
  font-size: var(--fs);
}
.full {
  --title-h: 46px; --status-h: 36px; --task-h: 67px; --fs: 20px;
  --win: 78px; --win-gap: 7px; --win-icon: 22px;
  --btn-w: 68px; --btn-h: 70px; --btn-gap: 4px; --btn-icon: 48px;
  --edu: 36px; --edu-top: 24px; --edu-right: 22px;
  --zoom: 43px; --zoom-icon: 24px; --zoom-right: 23px; --zoom-bottom: 30px;
  --panel: 480px; --head-h: 64px; --head-fs: 30px; --head-icon: 38px; --pad: 16px;
  --sel-h: 53px; --sel-fs: 24px; --sel-pad: 20px; --chev: 22px;
  --eff-h: 68px; --eff-fs: 35px; --swap: 39px;
  --ring: 266px; --ring-top: 17px; --ring-bottom: 52px; --num: 54px; --pct: 28px; --num-lh: 62px;
  --km-fs: 34px; --km-h: 48px; --delta-h: 40px;
  --g-fs: 26px; --g-h: 48px; --row-h: 40px; --row-tight: 32px; --g-gap: 16px; --g-icon: 36px; --g-icon-gap: 24px; --tab-pad: 8px; --tab-end: 16px;
  --start: 82px; --search: 611px; --search-fs: 25px; --search-gap: 20px; --lens: 38px; --app: 88px; --app-icon: 44px;
  --tray: 58px; --tray-icon: 29px; --deu: 74px; --deu-gap: 14px; --clock: 81px; --clock-lh: 31px; --note: 112px; --wx: 40px; --wx-gap: 14px; --line: 2px;
  border: 4px solid #ff3f5b;
}
.mini {
  --title-h: 16px; --status-h: 11px; --task-h: 21px; --fs: 6px;
  --win: 24px; --win-gap: 2px; --win-icon: 7px;
  --btn-w: 22px; --btn-h: 22px; --btn-gap: 1px; --btn-icon: 15px;
  --edu: 11px; --edu-top: 8px; --edu-right: 7px;
  --zoom: 13px; --zoom-icon: 8px; --zoom-right: 7px; --zoom-bottom: 9px;
  --panel: 151px; --head-h: 20px; --head-fs: 9px; --head-icon: 12px; --pad: 5px;
  --sel-h: 17px; --sel-fs: 8px; --sel-pad: 6px; --chev: 6px;
  --eff-h: 21px; --eff-fs: 11px; --swap: 12px;
  --ring: 83px; --ring-top: 5px; --ring-bottom: 16px; --num: 17px; --pct: 9px; --num-lh: 19px;
  --km-fs: 11px; --km-h: 15px; --delta-h: 12px;
  --g-fs: 8px; --g-h: 15px; --row-h: 12px; --row-tight: 10px; --g-gap: 5px; --g-icon: 11px; --g-icon-gap: 8px; --tab-pad: 2px; --tab-end: 5px;
  --start: 25px; --search: 192px; --search-fs: 8px; --search-gap: 6px; --lens: 12px; --app: 28px; --app-icon: 14px;
  --tray: 18px; --tray-icon: 9px; --deu: 23px; --deu-gap: 4px; --clock: 26px; --clock-lh: 10px; --note: 34px; --wx: 13px; --wx-gap: 4px; --line: 1px;
}

.titlebar { display: grid; grid-template-columns: 1fr auto 1fr; align-items: center; background: linear-gradient(#122b47, #040f26); color: #e2e6ec; }
.titlebar h1 { font-size: var(--fs); white-space: nowrap; }
.window-buttons { display: flex; justify-content: flex-end; gap: var(--win-gap); }
.window-buttons button { width: var(--win); height: 100%; }
.window-buttons svg { width: var(--win-icon); height: var(--win-icon); fill: none; stroke: #fff; }

.work { position: relative; display: grid; grid-template-columns: 1fr var(--panel); min-height: 0; }
.stage { display: grid; grid-template: 141fr 1170fr 68fr / 777fr 1170fr 296fr; min-height: 0; min-width: 0; background: linear-gradient(#d1d1d1, #a9a9a9); }
.plan { grid-area: 2 / 2; width: 100%; height: 100%; outline: 1px solid #b5b5b5; min-height: 0; }
.grid { fill: none; stroke: #000; stroke-opacity: .13; stroke-width: 1; }
.ink { fill: none; stroke: #000; stroke-width: 1; }
.labels { font-family: "Open Sans", "Noto Sans", sans-serif; text-anchor: middle; }
.labels rect { fill: #fff; fill-opacity: .3; }
.labels text { fill: #111; }
.teal { fill: none; stroke: #0b9bd0; stroke-width: 3; stroke-opacity: .75; }

.toolbox { position: absolute; left: var(--btn-gap); top: var(--btn-gap); display: flex; gap: var(--btn-gap); }
.toolbox button { position: relative; width: var(--btn-w); height: var(--btn-h); color: #fff; }
.toolbox svg { width: var(--btn-icon); height: var(--btn-icon); }
.menu { background: linear-gradient(#14304f, #040f26); }
.menu i { position: absolute; right: 8%; bottom: 8%; width: 12%; height: 8%; background: #b6c0cc; clip-path: polygon(0 0, 100% 0, 50% 100%); }
.undo { background: #a3a3a3; }
.edition { position: absolute; right: calc(var(--panel) + var(--edu-right)); top: var(--edu-top); font-size: var(--edu); font-weight: 400; color: #585b5e; }
.zoom { position: absolute; right: calc(var(--panel) + var(--zoom-right)); bottom: var(--zoom-bottom); background: #f2f2f2; border: 1px solid #bbb; box-shadow: 0 0 3px rgb(0 0 0 / 40%); }
.zoom button { width: var(--zoom); height: var(--zoom); }
.zoom button:first-child { border-bottom: 1px solid #bbb; }
.zoom svg { width: var(--zoom-icon); height: var(--zoom-icon); fill: none; stroke: #14284c; stroke-width: 3; }
.splitter { position: absolute; right: calc(var(--panel) + var(--btn-gap)); top: 51%; width: var(--line); height: var(--pad); background: repeating-linear-gradient(#222 0 2px, transparent 2px 4px); }

.panel { background: #f0f0f0; box-shadow: 0 0 6px rgb(0 0 0 / 60%); min-width: 0; position: relative; }
.panel-head { display: flex; align-items: stretch; gap: 1px; height: var(--head-h); background: #3e3e3e; color: #ccc; }
.panel-head button { width: var(--head-h); background: #242424; }
.panel-head svg { width: var(--head-icon); height: var(--head-icon); fill: none; stroke: #fff; }
.panel-head h2 { flex: 1; align-self: center; text-align: right; padding-right: var(--pad); font-size: var(--head-fs); font-weight: 300; }
.family { position: relative; display: flex; align-items: center; height: var(--sel-h); border: 1px solid #b5b5b5; border-right: 0; background: #fff; }
.family select { flex: 1; height: 100%; appearance: none; border: 0; background: none; padding: 0 0 0 var(--sel-pad); font: inherit; font-size: var(--sel-fs); font-weight: 600; color: #555; }
.family svg { position: absolute; right: var(--pad); width: var(--chev); height: var(--chev); fill: none; stroke: #555; stroke-width: 5; }
.effort { display: flex; align-items: center; justify-content: space-between; height: var(--eff-h); padding: 0 var(--line) 0 var(--pad); }
.effort h3 { font-size: var(--eff-fs); font-weight: 300; color: #777; }
.effort button { width: var(--swap); height: var(--swap); background: #0085ff; }
.effort svg { width: 90%; height: 90%; }
.gauge { display: grid; place-items: center; margin: var(--ring-top) 0 var(--ring-bottom); }
.gauge > * { grid-area: 1 / 1; }
.gauge > svg { width: var(--ring); height: var(--ring); }
.gauge-text { text-align: center; padding-top: var(--pad); }
.gauge-text p { font-size: var(--num); line-height: var(--num-lh); font-weight: 700; color: #ff4500; }
.gauge-text small { font-size: var(--pct); }
.gauge-text a { display: inline-block; padding-top: var(--tab-pad); color: #0085ff; text-decoration: none; }
.distance { height: var(--km-h); line-height: var(--km-h); text-align: center; font-size: var(--km-fs); font-weight: 300; color: #777; }
.delta { height: var(--delta-h); line-height: var(--delta-h); text-align: center; color: #111; }
.delta em { font-style: normal; color: #ff4500; }
table { width: 100%; border-collapse: collapse; background: #d3d3d3; border-left: var(--line) solid #f0f0f0; border-top: var(--tab-pad) solid #d3d3d3; border-bottom: var(--tab-end) solid #d3d3d3; }
tr { height: var(--row-h); }
th, td { padding: 0 var(--pad); font-weight: 400; text-align: left; vertical-align: middle; color: #000; white-space: nowrap; }
td { text-align: right; }
.group { height: var(--g-h); }
.group th, .group td { font-size: var(--g-fs); color: #008000; }
.group svg { width: var(--g-icon); height: var(--g-icon); margin-right: var(--g-icon-gap); vertical-align: middle; }
.compact tr:nth-child(2) { height: var(--row-tight); }
tbody:not(.compact)::after { content: ""; display: table-row; height: var(--g-gap); }

.status { display: flex; align-items: center; padding-left: var(--sel-pad); background: linear-gradient(#14304d, #040f26); color: #d4d9e0; }

.taskbar { display: flex; align-items: stretch; background: #1d1d1d; color: #fff; min-width: 0; }
.start { width: var(--start); }
.start svg { width: var(--tray-icon); height: var(--tray-icon); }
.search { display: flex; align-items: center; gap: var(--search-gap); width: var(--search); padding: 0 var(--sel-pad); background: #f2f2f2; border-top: var(--line) solid #c2c2c2; color: #000; font-size: var(--search-fs); }
.search svg { width: var(--lens); height: var(--lens); }
.search input { flex: 1; background: none; }
.search input::placeholder { color: #222; opacity: 1; }
.app { width: var(--app); }
.app svg { width: var(--app-icon); height: var(--app-icon); }
.app.front { background: #4a4a4a; }
.tray { display: flex; align-items: center; margin-left: auto; }
.weather { display: flex; align-items: center; gap: var(--wx-gap); padding-right: var(--sel-pad); }
.weather svg { width: var(--wx); height: var(--wx); }
.tray-icon { width: var(--tray); height: var(--tray-icon); }
.lang { width: var(--deu); margin-right: var(--deu-gap); text-align: center; }
.clock { width: var(--clock); line-height: var(--clock-lh); text-align: center; white-space: nowrap; }
.note { width: var(--note); height: var(--tray-icon); }
</style>
